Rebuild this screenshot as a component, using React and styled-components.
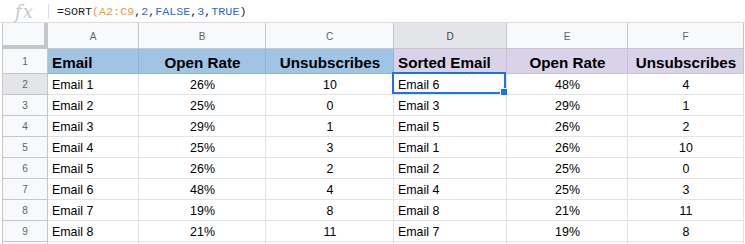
import React from 'react'
import styled, { createGlobalStyle } from 'styled-components'

const Global = createGlobalStyle`
  html, body {
    margin: 0;
    padding: 0;
    background: #fff;
    overflow: hidden;
  }
  body {
    width: 745px;
    height: 244px;
    font-family: "Liberation Sans", Arial, sans-serif;
  }
`

const FormulaBar = styled.div`
  display: flex;
  align-items: center;
  height: 22px;
  border-bottom: 1px solid #dadce0;
`

const FxLabel = styled.div`
  width: 48px;
  padding-left: 15px;
  box-sizing: border-box;
  font-family: "DejaVu Serif", "Liberation Serif", serif;
  font-style: italic;
  font-size: 18px;
  color: #c4c7c9;
  letter-spacing: 1px;
`

const Divider = styled.div`
  width: 1px;
  height: 14px;
  background: #dadce0;
  margin-right: 8px;
`

const Formula = styled.div`
  font-family: "Liberation Mono", "DejaVu Sans Mono", monospace;
  font-size: 11.7px;
  color: #202124;
  padding-top: 2px;
`

const Tok = styled.span`
  color: ${p => p.$c || 'inherit'};
`

const Sheet = styled.div`
  display: flex;
`

const LeftEdge = styled.div`
  width: 2px;
  border-right: 1px solid #c7c7c7;
  background: #fff;
`

const Grid = styled.div`
  display: grid;
  grid-template-columns: 45px 91px 127px 128px 113px 121px 116px;
  grid-template-rows: 26px 25px repeat(9, 21px);
`

const Corner = styled.div`
  box-sizing: border-box;
  background: #f8f9fa;
  border-right: 4px solid #c4c7c9;
  border-bottom: 4px solid #c4c7c9;
`

const ColHead = styled.div`
  box-sizing: border-box;
  display: flex;
  align-items: center;
  justify-content: center;
  padding-top: 2px;
  background: ${p => (p.$active ? '#e3e5e8' : '#f8f9fa')};
  border-right: 1px solid #c7c7c7;
  border-bottom: 1px solid #c7c7c7;
  color: ${p => (p.$active ? '#3c4043' : '#5f6368')};
  font-size: 10px;
`

const RowHead = styled.div`
  box-sizing: border-box;
  display: flex;
  align-items: center;
  justify-content: center;
  padding-top: 1px;
  background: ${p => (p.$active ? '#e3e5e8' : '#f8f9fa')};
  border-right: 1px solid #c7c7c7;
  border-bottom: 1px solid #c7c7c7;
  color: #5f6368;
  font-size: 10px;
`

const Cell = styled.div`
  position: relative;
  box-sizing: border-box;
  display: flex;
  align-items: center;
  justify-content: ${p => (p.$center ? 'center' : 'flex-start')};
  padding: 1px 3px 0 4px;
  background: ${p => p.$bg || '#fff'};
  border-right: 1px solid #e2e3e3;
  border-bottom: 1px solid #e2e3e3;
  color: #000;
  font-size: 12.4px;
  white-space: nowrap;
`

const HeadCell = styled(Cell)`
  font-weight: bold;
  font-size: 15.2px;
  padding-top: 3px;
  border-right-color: ${p => p.$line || '#e2e3e3'};
  border-bottom-color: ${p => p.$line || '#e2e3e3'};
`

const Selection = styled.div`
  position: absolute;
  left: -2px;
  top: -2px;
  right: 0;
  bottom: 0;
  border: 2px solid #1a73e8;
  pointer-events: none;
`

const Handle = styled.div`
  position: absolute;
  right: -4px;
  bottom: -4px;
  width: 6px;
  height: 6px;
  background: #1a73e8;
  border: 1px solid #fff;
`

const BLUE = '#a0c4e4'
const PURPLE = '#d9d2e9'

const cols = ['A', 'B', 'C', 'D', 'E', 'F']
const headers = [
  { t: 'Email', bg: BLUE, line: '#8fb5d8' },
  { t: 'Open Rate', bg: BLUE, c: true, line: '#8fb5d8' },
  { t: 'Unsubscribes', bg: BLUE, c: true, line: '#8fb5d8' },
  { t: 'Sorted Email', bg: PURPLE, line: '#c9c0de' },
  { t: 'Open Rate', bg: PURPLE, c: true, line: '#c9c0de' },
  { t: 'Unsubscribes', bg: PURPLE, c: true, line: '#c9c0de' },
]

const rows = [
  ['Email 1', '26%', '10', 'Email 6', '48%', '4'],
  ['Email 2', '25%', '0', 'Email 3', '29%', '1'],
  ['Email 3', '29%', '1', 'Email 5', '26%', '2'],
  ['Email 4', '25%', '3', 'Email 1', '26%', '10'],
  ['Email 5', '26%', '2', 'Email 2', '25%', '0'],
  ['Email 6', '48%', '4', 'Email 4', '25%', '3'],
  ['Email 7', '19%', '8', 'Email 8', '21%', '11'],
  ['Email 8', '21%', '11', 'Email 7', '19%', '8'],
]

export default function App() {
  return (
    <>
      <Global />
      <FormulaBar>
        <FxLabel>fx</FxLabel>
        <Divider />
        <Formula>
          =SORT<Tok $c="#f29b30">(A2:C9</Tok>,<Tok $c="#2a6ad5">2</Tok>,
          <Tok $c="#2a6ad5">FALSE</Tok>,<Tok $c="#2a6ad5">3</Tok>,
          <Tok $c="#2a6ad5">TRUE</Tok>)
        </Formula>
      </FormulaBar>
      <Sheet>
        <LeftEdge />
        <Grid>
          <Corner />
          {cols.map(c => (
            <ColHead key={c} $active={c === 'D'}>{c}</ColHead>
          ))}
          <RowHead>1</RowHead>
          {headers.map((h, i) => (
            <HeadCell key={i} $bg={h.bg} $center={h.c} $line={h.line}>{h.t}</HeadCell>
          ))}
          {rows.map((r, ri) => (
            <React.Fragment key={ri}>
              <RowHead $active={ri === 0}>{ri + 2}</RowHead>
              {r.map((v, ci) => (
                <Cell key={ci} $center={ci % 3 !== 0}>
                  {v}
                  {ri === 0 && ci === 3 && (
                    <Selection>
                      <Handle />
                    </Selection>
                  )}
                </Cell>
              ))}
            </React.Fragment>
          ))}
          <RowHead />
          {cols.map(c => (
            <Cell key={c} />
          ))}
        </Grid>
      </Sheet>
    </>
  )
}
